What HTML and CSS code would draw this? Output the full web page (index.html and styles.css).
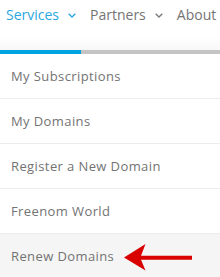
FILE: index.html
```html
<!DOCTYPE html>
<html>
<head>
<meta charset="utf-8">
<link rel="stylesheet" href="styles.css">
</head>
<body>
<nav class="nav">
  <span class="nav-item active">Services<svg class="chev" width="8" height="5" viewBox="0 0 8 5"><path d="M0.7 0.7 L4 4 L7.3 0.7" fill="none" stroke="currentColor" stroke-width="1.4"/></svg></span>
  <span class="nav-item">Partners<svg class="chev" width="8" height="5" viewBox="0 0 8 5"><path d="M0.7 0.7 L4 4 L7.3 0.7" fill="none" stroke="currentColor" stroke-width="1.4"/></svg></span>
  <span class="nav-item">About</span>
</nav>
<div class="bar"><div class="bar-active"></div></div>
<ul class="menu">
  <li class="row">My Subscriptions</li>
  <li class="row">My Domains</li>
  <li class="row">Register a New Domain</li>
  <li class="row">Freenom World</li>
  <li class="row hover">Renew Domains</li>
</ul>
<svg class="arrow" width="80" height="32" viewBox="0 0 80 32"><polygon points="4,17.5 25.5,4 21,15.8 72,15.8 72,19.8 21,19.8 25.5,30.5" fill="#d90000"/></svg>
</body>
</html>
```
FILE: styles.css
```css
html, body {
  margin: 0;
  padding: 0;
  background: #fff;
  width: 220px;
  height: 277px;
  overflow: hidden;
  position: relative;
  font-family: "Open Sans", "Liberation Sans", sans-serif;
}
.nav {
  display: flex;
  align-items: flex-start;
  height: 50px;
  box-sizing: border-box;
  padding: 5px 0 0 6px;
  white-space: nowrap;
  background: linear-gradient(to bottom, #fff 0px, #fff 38px, #f7f7f7 50px);
}
.nav-item {
  font-size: 14px;
  line-height: 19px;
  color: #747474;
  display: flex;
  align-items: center;
  margin-right: 14px;
  flex-shrink: 0;
}
.nav-item.active {
  color: #2aa8e0;
}
.chev {
  margin-left: 9px;
  margin-top: 1px;
  color: #7a7a7a;
}
.active .chev {
  color: #2aa8e0;
}
.bar {
  height: 4px;
  background: #c4c4c4;
}
.bar-active {
  width: 81px;
  height: 4px;
  background: #00a3e2;
}
.menu {
  list-style: none;
  margin: 0;
  padding: 0;
}
.row {
  height: 44px;
  border-bottom: 1px solid #ececec;
  display: flex;
  align-items: center;
  padding-left: 11px;
  font-size: 13px;
  letter-spacing: 0.4px;
  color: #737373;
}
.row.hover {
  background: #f5f5f5;
  border-bottom: none;
}
.arrow {
  position: absolute;
  left: 120px;
  top: 240px;
}
```
